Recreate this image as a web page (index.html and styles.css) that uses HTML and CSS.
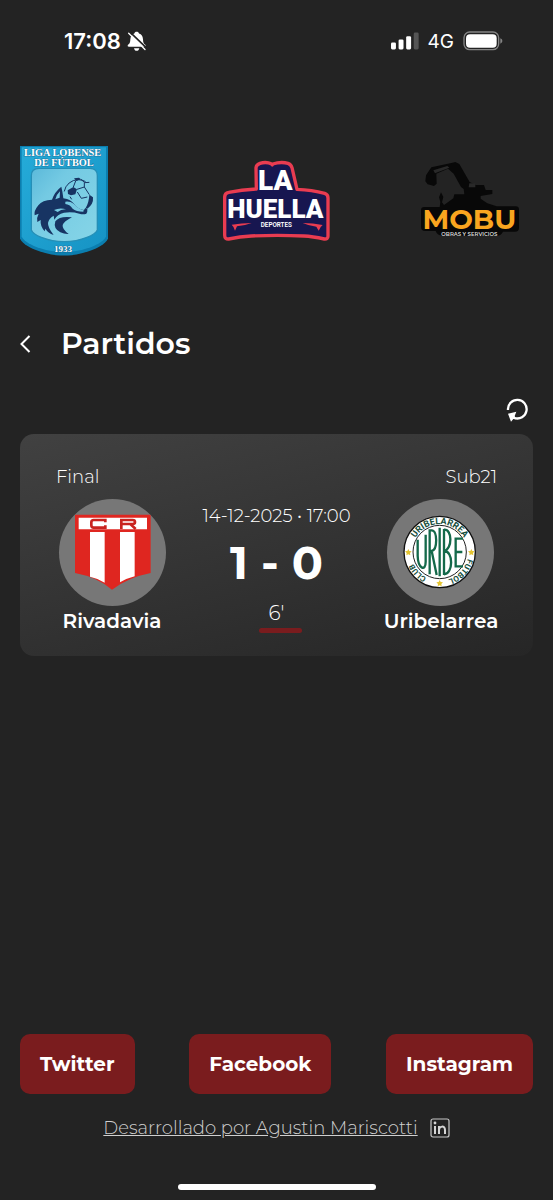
FILE: index.html
```html
<!DOCTYPE html>
<html lang="es">
<head>
<meta charset="utf-8">
<meta name="viewport" content="width=device-width, initial-scale=1">
<title>Partidos</title>
<link rel="stylesheet" href="styles.css">
</head>
<body>
<div class="status">
  <div class="status-group">
    <span class="clock">17:08</span>
    <svg class="bell" viewBox="260 47 60 62" aria-hidden="true">
      <path fill="#fff" d="M289 49c4 0 6 2 7 5 8 2 11 8 12 17 0 9 2 13 7 17 2 3 1 6-3 6h-46c-4 0-5-3-3-6 5-4 7-8 7-17 1-9 5-15 12-17 1-3 3-5 7-5zM281 98h16c-1 5-4 8-8 8s-7-3-8-8z"/>
      <path stroke="#232323" stroke-width="5" d="M269 50l50 48"/>
      <path stroke="#fff" stroke-width="4" stroke-linecap="round" d="M265 53l49 49"/>
    </svg>
  </div>
  <div class="status-group">
    <svg class="signal" viewBox="36 50 85 53" aria-hidden="true">
      <g fill="#fff"><rect x="36" y="81" width="15" height="21" rx="4"/><rect x="59" y="72" width="15" height="30" rx="4"/><rect x="82" y="62" width="15" height="40" rx="4"/></g>
      <rect x="105" y="51" width="15" height="51" rx="4" fill="#555"/>
    </svg>
    <span class="network">4G</span>
    <svg class="battery" viewBox="247 46 120 60" aria-hidden="true">
      <rect x="250" y="49" width="104" height="53" rx="17" fill="none" stroke="#858585" stroke-width="4"/>
      <rect x="256" y="56" width="92" height="40" rx="12" fill="#fff"/>
      <path d="M359 68c8 3 8 13 0 16z" fill="#858585"/>
    </svg>
  </div>
</div>

<header class="logos">
  <svg class="logo-league" viewBox="60 48 264 330" role="img" aria-label="Liga Lobense de Fútbol">
    <defs>
      <linearGradient id="shield" x1="0" x2="1" y1="0" y2="1"><stop offset="0" stop-color="#25abd9"/><stop offset="1" stop-color="#1693c4"/></linearGradient>
      <linearGradient id="inner" x1="0" x2="1" y1="0" y2="1"><stop offset="0" stop-color="#5bb9da"/><stop offset=".3" stop-color="#74cae3"/><stop offset="1" stop-color="#86d5e7"/></linearGradient>
    </defs>
    <path fill="#0b7eaf" d="M60 48h264v278c-9 16-29 27-58 38-47 17-102 17-148 0-29-11-49-22-58-38z"/>
    <path fill="url(#shield)" d="M65 52h253v268c-9 15-28 25-56 35-45 15-96 15-141 0-28-10-47-20-56-35z"/>
    <path fill="url(#inner)" stroke="#258fb7" stroke-width="4" d="M117 115h153q22 0 22 22v163q-6 13-31 22c-42 17-94 17-137 0q-25-9-30-22V137q0-22 23-22z"/>
    <g fill="#fff" stroke="#165882" stroke-width="2" paint-order="stroke" font-family="Liberation Serif, serif" font-weight="700" text-anchor="middle">
      <text x="188" y="79" font-size="31">LIGA LOBENSE</text>
      <text x="192" y="108" font-size="31">DE FÚTBOL</text>
      <text x="189" y="367" font-size="27">1933</text>
    </g>
    <path fill="#173463" d="M184 170q-20 15-28 39-29 1-41 17-14 17-11 30l12-5q-7 12-4 25l10-6q-2 18 12 34l2-8q8 13 25 19-18-23-17-36 2-14 17-22l2 12q9-17 29-21 24-4 46 3 12 3 21 0 4-4 3-14l-6-3-4 6q-14-1-25-12-11-16-26-21l-11-2q-2-19-6-35z"/>
    <path fill="#77cae3" d="M180 184q-12 11-14 24l13-5zM196 215q14-2 25 6 12 15 30 19l-1 5q-22 0-32-9-9-13-22-14zM162 240q17-8 37-2-16-1-26 8z"/>
    <path fill="#173463" d="M216 262q-37-5-50 12-7 22 15 33 13 6 25 5-20-15-18-27 3-10 28-23z"/>
    <circle cx="235" cy="192" r="43" fill="none" stroke="#173463" stroke-width="3" stroke-dasharray="82 190" stroke-dashoffset="-142"/>
    <g fill="#173463">
      <path d="M203 181l17-10 11 7-5 15-13 3-9-4zM268 194l11 8q2 21-17 34l-5-2q10-17 11-40zM222 145l15-2 6 5-14 5z"/>
      <path fill="none" stroke="#173463" stroke-width="3" d="M220 171l7-18m4 25l22-7m-10-23l11 10 14-1m-15 14l15 23m-15-23v-13m-43 42l5 8m17-22l12 19 18-4"/>
    </g>
  </svg>
  <svg class="logo-huella" viewBox="39 30 327 246" role="img" aria-label="La Huella Deportes">
    <path fill="#171650" stroke="#e93c51" stroke-width="10" stroke-linejoin="round" d="M153 40q19-6 35 2 2 6 3 0 25-8 46-2 9 3 12 13l15 65q45 2 83 12 10 3 10 14v114q0 10-11 9-36-8-61-9-82-4-158 0-34 2-68 9-12 1-12-11V141q0-12 12-14 39-8 83-10l-1-64q1-9 12-13z"/>
    <path fill="#e93c51" d="M68 224q30-5 60-5-21 8-44 10l-6 13q-3-12-10-18zM281 219q31 0 60 6-8 6-12 17l-7-12q-21-2-41-11z"/>
    <g fill="#fff" font-family="Roboto, sans-serif" text-anchor="middle">
      <g font-weight="900">
        <text x="199" y="121" font-size="84">LA</text>
        <text x="199" y="204" font-size="78">HUELLA</text>
      </g>
      <text x="202" y="231" font-size="19" font-weight="600">DEPORTES</text>
    </g>
  </svg>
  <svg class="logo-mobu" viewBox="36 30 336 240" role="img" aria-label="Mobu obras y servicios">
    <path fill="#080808" d="M36 178q0-10 10-10h46l2-15-4-14 6-15 7 14-4 16 6 8 28-20 3-12h30l-2-16-8-6-22-40-17-15-35 15 1 30-8 7-19-5-7-9 2-18 16-24 60-13 12-3 12 6 31 54 18 9h25l5 15h20v12l-35 6v8l20 14 28 9h57q10 0 10 10v54q0 12-12 12h-36q-6 12-17 12H100q-15 0-20-14H49q-13 0-13-13z"/>
    <path fill="#292929" d="M73 58l42-13 6 5-43 17zM181 97h18v12h-20z"/>
    <g font-family="Montserrat, sans-serif" text-anchor="middle">
      <text x="181" y="234" font-size="84" font-weight="700" fill="#f9a51f">MOBU</text>
      <text x="181" y="256" font-size="16" font-weight="600" fill="#ddd">OBRAS Y SERVICIOS</text>
    </g>
  </svg>
</header>

<main>
  <div class="heading">
    <button class="back" aria-label="Volver"><svg viewBox="0 0 10 18" aria-hidden="true"><path d="M9 1L1 9l8 8"/></svg></button>
    <h1>Partidos</h1>
  </div>
  <div class="tools">
    <button class="refresh" aria-label="Actualizar">
      <svg viewBox="80 54 66 72" aria-hidden="true"><path fill="none" stroke="#fff" stroke-width="7" d="M86 90a28 28 0 1 1 19 24"/><path fill="#fff" d="M86 101l25-6-5 13 4 10-8-1-7 8z"/></svg>
    </button>
  </div>

  <article class="card">
    <div class="card-head"><span>Final</span><span>Sub21</span></div>
    <div class="match">
      <div class="team">
        <svg class="crest" viewBox="56 28 321 321" role="img" aria-label="Escudo de Rivadavia">
          <path fill="#df2620" d="M104 75h227v175q-67 13-116 50-45-38-111-50z"/>
          <path fill="#fff" d="M115 84h205v35H115zM149 127h44v152q-20-13-44-18zM239 127h44v133q-24 6-44 18z"/>
          <g fill="none" stroke="#c9231f" stroke-width="8"><path d="M195 98v-7h-35q-7 0-7 7v9q0 7 7 7h35v-7M243 118V91h34q7 0 7 6t-7 6h-32m25 0l16 15"/></g>
        </svg>
        <span class="team-name">Rivadavia</span>
      </div>
      <div class="result">
        <span class="date">14-12-2025 • 17:00</span>
        <strong class="score">1 - 0</strong>
        <span class="minute">6'</span>
      </div>
      <div class="team">
        <svg class="crest" viewBox="53 28 321 321" role="img" aria-label="Escudo de Uribelarrea">
          <defs>
            <path id="arc-top" d="M127 187a84 84 0 0 1 168 0"/>
            <path id="arc-club" d="M211 273a86 86 0 0 1-86-86"/>
            <path id="arc-futbol" d="M297 187a86 86 0 0 1-86 86"/>
          </defs>
          <circle cx="211" cy="187" r="107" fill="#fff" stroke="#111" stroke-width="4"/>
          <circle cx="211" cy="187" r="80" fill="#fff" stroke="#222" stroke-width="3"/>
          <g fill="none" stroke="#14694a" stroke-width="7">
            <path d="M145 150v48c1 38 24 50 24 18v-81M181 254V122h6c18 0 18 58 0 62h-6m6 0l15 72M211 114v146M224 118v138m0-136c25-3 26 58 0 64m0 0c29-1 28 69 0 70M281 147h-22v83h22M259 187h20"/>
          </g>
          <g fill="#174f3c" font-family="Roboto, sans-serif" font-weight="700" font-size="27" text-anchor="middle">
            <text><textPath href="#arc-top" startOffset="50%">URIBELARREA</textPath></text>
            <text font-size="24"><textPath href="#arc-club" startOffset="52%">CLUB</textPath></text>
            <text font-size="24"><textPath href="#arc-futbol" startOffset="48%">FUTBOL</textPath></text>
          </g>
          <g fill="#e4c431"><path id="star" d="M117 178l3 6 7 1-5 5 1 7-6-3-6 3 1-7-5-5 7-1z"/><use href="#star" x="189"/><use href="#star" x="94" y="93"/></g>
        </svg>
        <span class="team-name">Uribelarrea</span>
      </div>
    </div>
  </article>
</main>

<footer>
  <nav class="socials">
    <a href="#twitter">Twitter</a>
    <a href="#facebook">Facebook</a>
    <a href="#instagram">Instagram</a>
  </nav>
  <a class="credit" href="#linkedin">
    <span>Desarrollado por Agustin Mariscotti</span>
    <svg viewBox="0 0 20 20" aria-hidden="true"><rect x="1" y="1" width="18" height="18" rx="2" fill="none" stroke="#c8c8c8" stroke-width="1.2"/><path fill="none" stroke="#d4d4d4" stroke-width="2" d="M5 8v8M9 16V8m0 4c0-4 6-5 6 0v4"/><circle cx="5" cy="5" r="1.4" fill="#d4d4d4"/></svg>
  </a>
  <div class="home-bar"></div>
</footer>
</body>
</html>
```
FILE: styles.css
```css
* { box-sizing: border-box; }

body {
  margin: 0;
  min-height: 100vh;
  display: flex;
  flex-direction: column;
  background: #232323;
  color: #fff;
  font-family: Montserrat, Inter, "Open Sans", sans-serif;
}

a { color: inherit; }
svg { display: block; flex: none; }
button { padding: 0; border: 0; background: none; color: inherit; cursor: pointer; }

.status {
  display: flex;
  justify-content: space-between;
  align-items: center;
  height: 82px;
  padding: 0 50px 0 64px;
  font-family: Inter, sans-serif;
}
.status-group { display: flex; align-items: center; gap: 9px; }
.status-group:first-child { gap: 6px; }
.clock { font-size: 22px; font-weight: 600; }
.network { font-size: 19px; }
.bell { width: 20px; height: 21px; }
.signal { width: 28px; height: 18px; }
.battery { width: 40px; height: 20px; }

.logos {
  display: grid;
  grid-template-columns: 1fr auto 1fr;
  align-items: center;
  padding: 64px 20px 0;
}
.logo-league { width: 88px; height: 110px; }
.logo-huella { width: 109px; height: 82px; }
.logo-mobu { width: 112px; height: 80px; justify-self: end; }

main { padding: 64px 20px 0; }

.heading { display: flex; align-items: center; gap: 30px; height: 48px; }
.back svg { width: 11px; height: 18px; fill: none; stroke: #fff; stroke-width: 2; }
h1 { margin: 0; font-size: 30px; font-weight: 600; line-height: 40px; }

.tools { display: flex; justify-content: flex-end; padding: 30px 5px 12px 0; }
.refresh svg { width: 22px; height: 24px; }

.card {
  padding: 31px 36px 23px;
  border-radius: 14px;
  background: linear-gradient(165deg, #414141, #262626);
}
.card-head { display: flex; justify-content: space-between; font-size: 18px; line-height: 24px; font-weight: 300; }
.match { display: flex; justify-content: space-between; margin-top: 10px; }
.team { display: flex; flex-direction: column; align-items: center; width: 112px; }
.crest { width: 107px; height: 107px; border-radius: 50%; background: #777; }
.team-name { margin-top: 3px; font-size: 20px; line-height: 24px; font-weight: 600; white-space: nowrap; }
.result { display: flex; flex-direction: column; align-items: center; white-space: nowrap; padding-top: 5px; }
.date { font-size: 18px; line-height: 24px; font-weight: 300; }
.score { margin-top: 10px; font-size: 46px; line-height: 50px; font-weight: 700; }
.minute { margin-top: 13px; padding: 0 14px; font-size: 20px; line-height: 24px; font-weight: 300; }
.minute::after { content: ""; display: block; height: 5px; margin: 3px -18px 0 -10px; border-radius: 3px; background: #7a1c1e; }

footer { margin-top: auto; padding: 0 20px 10px; display: flex; flex-direction: column; align-items: center; }
.socials { display: flex; justify-content: space-between; align-self: stretch; }
.socials a {
  padding: 0 20px;
  border-radius: 10px;
  background: #7a1c1e;
  font-size: 20px;
  line-height: 60px;
  font-weight: 700;
  text-decoration: none;
}
.credit { display: flex; align-items: center; gap: 12px; margin-top: 22px; font-size: 18px; line-height: 24px; font-weight: 300; color: #d0d0d0; }
.credit svg { width: 20px; height: 20px; }
.home-bar { width: 198px; height: 6px; margin-top: 44px; border-radius: 3px; background: #fff; }
```
